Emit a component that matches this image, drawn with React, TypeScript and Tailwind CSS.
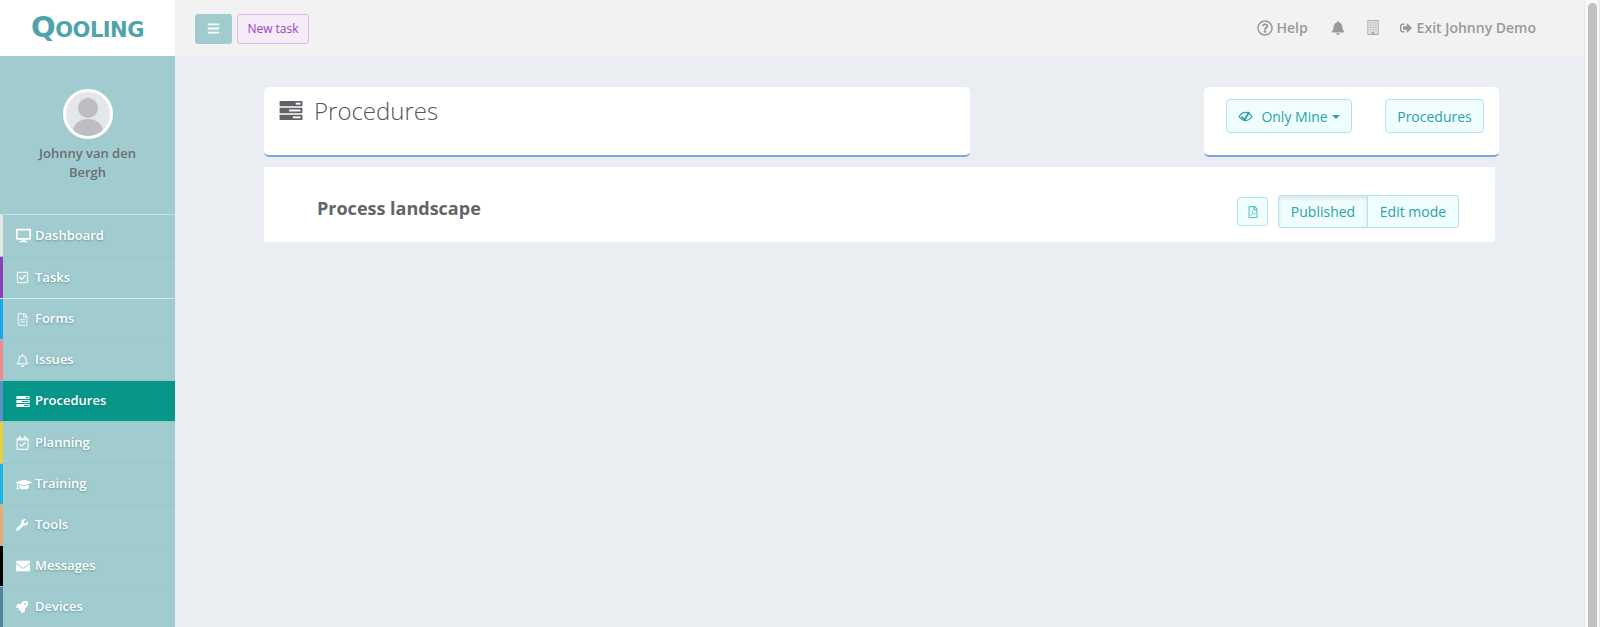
import {
  FaBars,
  FaBell,
  FaDesktop,
  FaEnvelope,
  FaGraduationCap,
  FaRegBell,
  FaRegCalendarCheck,
  FaRegCheckSquare,
  FaRegFileAlt,
  FaRegFilePdf,
  FaRegQuestionCircle,
  FaRocket,
  FaSignOutAlt,
  FaWrench,
} from 'react-icons/fa';

// the stacked bars used for Procedures, each with a light slot on the right
function ServerIcon({ className }: { className?: string }) {
  return (
    <svg viewBox="0 0 24 20" className={className} fill="currentColor">
      <rect x="0" y="0" width="24" height="5.6" rx="0.6" />
      <rect x="0" y="7.2" width="24" height="5.6" rx="0.6" />
      <rect x="0" y="14.4" width="24" height="5.6" rx="0.6" />
      <rect x="17" y="1.8" width="5" height="2" fill="#fff" />
      <rect x="10" y="9" width="12" height="2" fill="#fff" />
      <rect x="14" y="16.2" width="8" height="2" fill="#fff" />
    </svg>
  );
}

function EyeIcon({ className }: { className?: string }) {
  return (
    <svg viewBox="0 0 16 12" className={className} fill="none" stroke="currentColor">
      <path d="M1 6c2-3 4.300-4.500 7-4.500S13 3 15 6c-2 3-4.300 4.500-7 4.500S3 9 1 6z" strokeWidth="1.300" />
      <path d="M3.500 6.200 7 9.500 12 1" strokeWidth="2" />
    </svg>
  );
}

function BuildingIcon({ className }: { className?: string }) {
  return (
    <svg viewBox="0 0 12 16" className={className}>
      <rect x="0.500" y="0.500" width="11" height="15" fill="#e3e3e3" stroke="#a8a8a8" />
      <path
        d="M2.500 3h1.500M5.300 3h1.500M8 3h1.500M2.500 5.500h1.500M5.300 5.500h1.500M8 5.500h1.500M2.500 8h1.500M5.300 8h1.500M8 8h1.500M2.500 10.500h1.500M5.300 10.500h1.500M8 10.500h1.500"
        stroke="#a8a8a8"
      />
      <rect x="4.500" y="12.500" width="3" height="3" fill="#a8a8a8" />
    </svg>
  );
}

const menu = [
  { label: 'Dashboard', Icon: FaDesktop, strip: 'bg-[#e6e6e6]', row: 'h-[42px] border-t-[#c9e3e3]', icon: 'h-[15px] w-[15px]' },
  { label: 'Tasks', Icon: FaRegCheckSquare, strip: 'bg-[#8f3db8]', row: 'h-[42px] border-t-[#98c9ca]', icon: 'h-[13px] w-[13px] opacity-85' },
  { label: 'Forms', Icon: FaRegFileAlt, strip: 'bg-[#17a8f2]', row: 'h-[41px] border-t-[#d5e9e9]', icon: 'h-[13px] w-[13px] opacity-70' },
  { label: 'Issues', Icon: FaRegBell, strip: 'bg-[#ee8b8f]', row: 'h-[41px] border-t-[#98c9ca]', icon: 'h-[13px] w-[13px] opacity-85' },
  { label: 'Procedures', Icon: ServerIcon, strip: 'bg-[#5b90cf]', row: 'h-[41px] border-t-[#98c9ca] bg-[#06978a]', icon: 'h-[11px] w-[14px] [&_rect[fill]]:fill-[#06978a]' },
  { label: 'Planning', Icon: FaRegCalendarCheck, strip: 'bg-[#e8d13b]', row: 'h-[42px] border-t-[#98c9ca]', icon: 'h-[14px] w-[13px] opacity-80' },
  { label: 'Training', Icon: FaGraduationCap, strip: 'bg-[#1cb6e3]', row: 'h-[41px] border-t-[#98c9ca]', icon: 'h-[15px] w-[16px]' },
  { label: 'Tools', Icon: FaWrench, strip: 'bg-[#e6ab72]', row: 'h-[41px] border-t-[#98c9ca]', icon: 'h-[12px] w-[12px]' },
  { label: 'Messages', Icon: FaEnvelope, strip: 'bg-black', row: 'h-[41px] border-t-[#98c9ca]', icon: 'h-[14px] w-[14px]' },
  { label: 'Devices', Icon: FaRocket, strip: 'bg-[#4f8799]', row: 'h-[41px] border-t-[#98c9ca]', icon: 'h-[12px] w-[12px]' },
];

const tealBtn =
  'flex items-center justify-center border border-[#b2e4e7] bg-[#f0fdfe] text-[14px] text-[#2ba3a8]';

export default function App() {
  return (
    <div className="flex h-[627px] w-[1600px] overflow-hidden bg-[#eaeef3] font-['Open_Sans',sans-serif]">
      <aside className="flex w-[175px] shrink-0 flex-col">
        <div className="flex h-[56px] items-center justify-center bg-white pb-[1px]">
          <span className="font-['DejaVu_Sans',sans-serif] text-[21px] leading-none font-bold tracking-[-0.5px] text-[#4fa4a9]">
            <span className="text-[29px]">Q</span>OOLING
          </span>
        </div>
        <div className="flex h-[158px] flex-col items-center bg-[#a0cccf] pt-[33px]">
          <div className="h-[50px] w-[50px] overflow-hidden rounded-full border-[3px] border-white bg-[#e5e6e8]">
            <svg viewBox="0 0 44 44" className="h-full w-full">
              <circle cx="22" cy="16" r="10" fill="#bdbdc2" />
              <ellipse cx="22" cy="39" rx="15" ry="12" fill="#bdbdc2" />
            </svg>
          </div>
          <div className="mt-[5px] w-[120px] text-center text-[13px] leading-[19px] font-semibold text-[#6b6f72]">
            Johnny van den Bergh
          </div>
        </div>
        <nav className="flex flex-col bg-[#a0cccf]">
          {menu.map(({ label, Icon, strip, row, icon }) => (
            <div key={label} className={`flex border-t ${row}`}>
              <div className={`w-[3px] ${strip}`} />
              <div className="flex items-center pl-[13px] text-[13px] font-semibold text-white [text-shadow:0_1px_2px_rgba(60,110,115,0.55)]">
                <span className="flex w-[19px] items-center">
                  <Icon className={icon} />
                </span>
                {label}
              </div>
            </div>
          ))}
        </nav>
      </aside>

      <div className="flex w-[1409px] shrink-0 flex-col">
        <header className="flex h-[57px] shrink-0 items-center border-b border-[#eceef0] bg-[#f2f2f2] pl-[20px]">
          <button className="mt-[1px] flex h-[30px] w-[37px] items-center justify-center rounded-[3px] bg-[#a0cccf] text-white">
            <FaBars className="h-[13px] w-[13px]" />
          </button>
          <button className="mt-[1px] ml-[5px] h-[30px] w-[72px] rounded-[3px] border border-[#dcb9e8] bg-[#f5ecf8] text-[12px] text-[#9a3fc4]">
            New task
          </button>
          <div className="ml-auto flex items-center pr-[48px] pb-[1px] text-[14px] font-semibold text-[#999999]">
            <FaRegQuestionCircle className="h-[16px] w-[16px]" />
            <span className="ml-[3px]">Help</span>
            <FaBell className="ml-[23px] h-[14px] w-[14px]" />
            <BuildingIcon className="ml-[22px] h-[15px] w-[12px]" />
            <FaSignOutAlt className="ml-[21px] h-[12px] w-[12px]" />
            <span className="ml-[5px]">Exit Johnny Demo</span>
          </div>
        </header>

        <main className="pl-[89px] pt-[30px]">
          <div className="flex w-[1235px] justify-between">
            <section className="flex h-[70px] w-[706px] rounded-[5px] border-b-2 border-[#7ba4e0] bg-white pl-[15px] pt-[10px]">
              <ServerIcon className="mt-[4px] h-[19px] w-[24px] text-[#5f6266]" />
              <h1 className="ml-[11px] text-[24px] leading-[28px] font-light text-[#555555]">Procedures</h1>
            </section>
            <section className="flex h-[70px] w-[295px] justify-between rounded-[5px] border-b-2 border-[#7ba4e0] bg-white pt-[12px] pr-[15px] pl-[22px]">
              <button className={`${tealBtn} h-[34px] w-[126px] rounded-[4px]`}>
                <EyeIcon className="h-[11px] w-[15px]" />
                <span className="ml-[8px]">Only Mine</span>
                <span className="mt-[2px] ml-[4px] border-x-[4px] border-t-[4px] border-x-transparent border-t-[#2ba3a8]" />
              </button>
              <button className={`${tealBtn} h-[34px] w-[99px] rounded-[4px]`}>Procedures</button>
            </section>
          </div>
          <section className="mt-[10px] flex h-[75px] w-[1231px] items-start bg-white pr-[36px] pl-[53px]">
            <h2 className="mt-[29px] flex-1 text-[18px] leading-[24px] font-bold text-[#626568]">Process landscape</h2>
            <button className={`${tealBtn} mt-[30px] h-[29px] w-[31px] rounded-[3px]`}>
              <FaRegFilePdf className="h-[12px] w-[12px] opacity-70" />
            </button>
            <div className="mt-[28px] ml-[10px] flex h-[33px]">
              <button className={`${tealBtn} w-[90px] rounded-l-[3px] border-[#9fd3d5] shadow-[inset_0_2px_4px_rgba(0,0,0,0.1)]`}>
                Published
              </button>
              <button className={`${tealBtn} w-[91px] rounded-r-[3px] border-l-0`}>Edit mode</button>
            </div>
          </section>
        </main>
      </div>

      <div className="w-[16px] shrink-0 border-x border-[#e8e8e8] bg-[#f8f8f8] pt-[3px] pl-[3px]">
        <div className="h-full w-[9px] rounded-t-full bg-[#c1c1c1]" />
      </div>
    </div>
  );
}
